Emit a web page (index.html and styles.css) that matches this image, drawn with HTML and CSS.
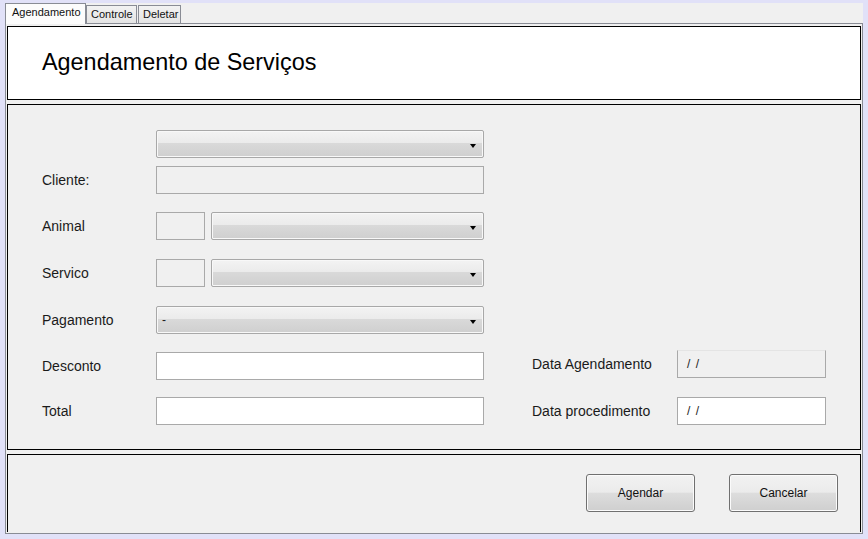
FILE: index.html
```html
<!DOCTYPE html>
<html>
<head>
<meta charset="utf-8">
<link rel="stylesheet" href="styles.css">
</head>
<body>
<div class="window">
  <div class="tabs">
    <div class="tab active">Agendamento</div>
    <div class="tab">Controle</div>
    <div class="tab">Deletar</div>
  </div>
  <div class="tabpage">
    <div class="panel header">
      <h1 class="title">Agendamento de Serviços</h1>
    </div>
    <div class="panel form">
      <div class="row first">
        <span class="label"></span>
        <div class="combo wide"><span class="arrow"></span></div>
      </div>
      <div class="row r-cliente">
        <span class="label">Cliente:</span>
        <div class="box disabled wide"></div>
      </div>
      <div class="row r-animal">
        <span class="label">Animal</span>
        <div class="box disabled small"></div>
        <div class="combo narrow"><span class="arrow"></span></div>
      </div>
      <div class="row r-servico">
        <span class="label">Servico</span>
        <div class="box disabled small"></div>
        <div class="combo narrow"><span class="arrow"></span></div>
      </div>
      <div class="row r-pag">
        <span class="label">Pagamento</span>
        <div class="combo wide"><span class="combo-text">-</span><span class="arrow"></span></div>
      </div>
      <div class="row r-desc">
        <span class="label">Desconto</span>
        <div class="box white wide"></div>
        <span class="label date-label up">Data Agendamento</span>
        <div class="box disabled date nottop up"><span class="mask">/ /</span></div>
      </div>
      <div class="row r-total">
        <span class="label">Total</span>
        <div class="box white wide"></div>
        <span class="label date-label">Data procedimento</span>
        <div class="box white date"><span class="mask">/ /</span></div>
      </div>
    </div>
    <div class="panel actions">
      <button class="btn">Agendar</button>
      <button class="btn">Cancelar</button>
    </div>
  </div>
</div>
</body>
</html>
```

FILE: styles.css
```css
* { box-sizing: border-box; }
html, body { margin: 0; padding: 0; }
body {
  background: #e1e1f8;
  font-family: "Liberation Sans", Arial, sans-serif;
  font-size: 14px;
  color: #1a1a1a;
  width: 868px;
  height: 539px;
  overflow: hidden;
}
.window {
  padding: 3px 5px 0 5px;
  width: 868px;
}
.tabs {
  display: flex;
  height: 20px;
  background: #f0f0f0;
  align-items: flex-end;
  position: relative;
  z-index: 1;
}
.tab {
  font-size: 11px;
  height: 18px;
  line-height: 16px;
  padding: 0 4px;
  border: 1px solid #898c95;
  border-bottom: none;
  background: linear-gradient(#f2f2f2, #e4e4e4);
  margin-right: -1px;
  color: #111;
}
.tab:nth-child(2) { margin-left: 1px; width: 51px; }
.tab:nth-child(3) { margin-left: 2px; width: 43px; }
.tab.active {
  height: 21px;
  line-height: 17px;
  background: #fcfcfc;
  width: 81px;
  padding: 0 6px;
  margin-bottom: -1px;
}
.tabpage {
  border: 1px solid #898c95;
  background: #f0f0f0;
  height: 511px;
  padding: 2px 1px 1px 1px;
  display: flex;
  flex-direction: column;
  gap: 4px;
}
.panel {
  border: 1px solid #000;
  width: 854px;
}
.header {
  background: #fff;
  height: 74px;
  padding: 20px 0 0 34px;
}
.title {
  margin: 0;
  font-weight: normal;
  font-size: 23.4px;
  line-height: 30px;
  color: #000;
}
.form {
  height: 346px;
  background: #f0f0f0;
  padding: 25px 0 0 34px;
}
.row {
  display: flex;
  align-items: center;
  height: 28px;
}
.r-cliente { margin-top: 8px; }
.r-animal { margin-top: 18px; }
.r-servico { margin-top: 19px; }
.r-pag { margin-top: 19px; }
.r-desc { margin-top: 18px; }
.r-total { margin-top: 17px; }
.label {
  width: 114px;
  flex: none;
  color: #1a1a1a;
}
.date-label { width: 145px; margin-left: 48px; }
.up { margin-bottom: 4px; }
.box {
  height: 28px;
  border: 1px solid #a9a9a9;
  flex: none;
}
.box.disabled { background: #f0f0f0; }
.box.white { background: #fff; }
.box.nottop { border-top-color: #e4e4e4; }
.wide { width: 328px; }
.small { width: 49px; }
.date { width: 149px; padding-left: 9px; display: flex; align-items: center; }
.mask { font-size: 12px; letter-spacing: 1px; color: #222; }
.combo {
  height: 28px;
  flex: none;
  border: 1px solid #a8a8a8;
  border-radius: 2px;
  background: linear-gradient(#f3f3f3 0%, #ebebeb 45%, #d9d9d9 48%, #cfcfcf 100%);
  box-shadow: inset 0 0 0 1px #f8f8f8;
  position: relative;
  display: flex;
  align-items: center;
}
.combo.narrow { width: 273px; margin-left: 6px; }
.combo-text { padding-left: 5px; font-size: 12px; }
.arrow {
  position: absolute;
  right: 7px;
  top: 13px;
  width: 0;
  height: 0;
  border-left: 3.5px solid transparent;
  border-right: 3.5px solid transparent;
  border-top: 4px solid #000;
}
.actions {
  flex: 1;
  background: #f0f0f0;
  border-bottom: none;
  display: flex;
  justify-content: flex-end;
  align-items: flex-start;
  gap: 34px;
  padding: 19px 22px 0 0;
}
.btn {
  width: 109px;
  height: 38px;
  border: 1px solid #707070;
  border-radius: 3px;
  background: linear-gradient(#f2f2f2 0%, #ebebeb 48%, #dddddd 50%, #cfcfcf 100%);
  box-shadow: inset 0 0 0 1px #fbfbfb;
  font-family: "Liberation Sans", Arial, sans-serif;
  font-size: 12px;
  color: #111;
  padding: 0;
}
```
